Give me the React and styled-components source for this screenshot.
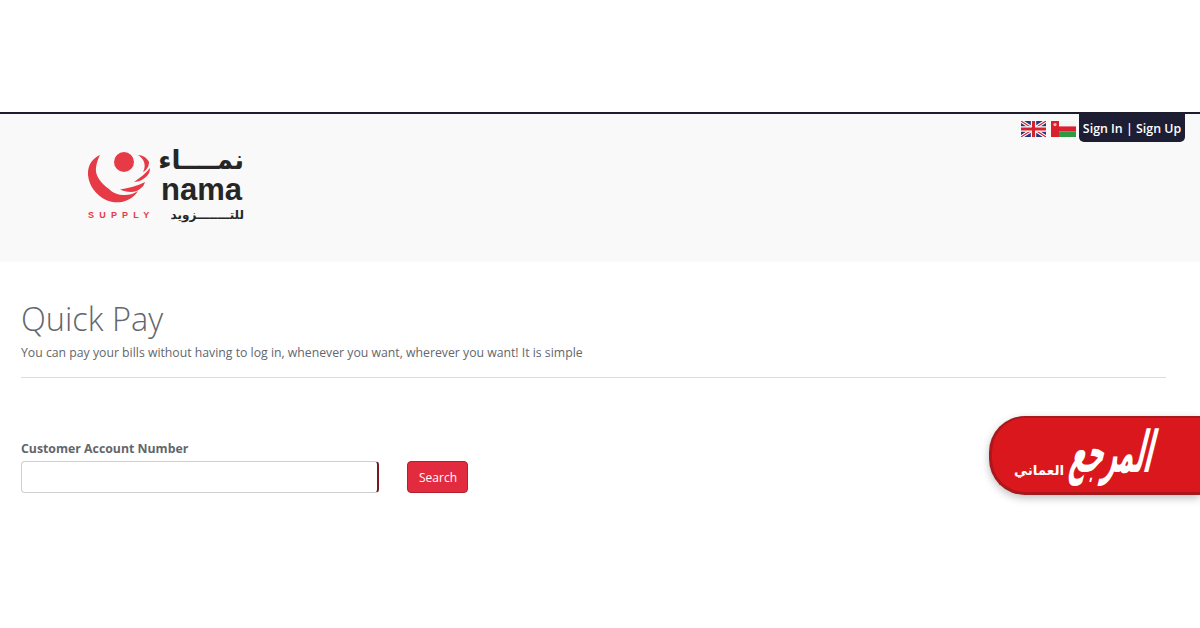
import React from "react";
import styled, { createGlobalStyle } from "styled-components";

const GlobalStyle = createGlobalStyle`
	html, body {
		margin: 0;
		padding: 0;
		background: #fff;
		font-family: "Open Sans", "Liberation Sans", sans-serif;
		color: #63666d;
	}
`;

function UkFlag() {
	return (
		<svg width='25' height='16' viewBox='0 0 25 16'>
			<rect width='25' height='16' fill='#27367c' />
			<path d='M0 0L25 16M25 0L0 16' stroke='#fff' strokeWidth='3.4' />
			<path d='M0 0L25 16M25 0L0 16' stroke='#d2232f' strokeWidth='1.1' />
			<path d='M12.5 0V16M0 8H25' stroke='#fff' strokeWidth='5.4' />
			<path d='M12.5 0V16M0 8H25' stroke='#d2232f' strokeWidth='3.2' />
		</svg>
	);
}

function OmanFlag() {
	return (
		<svg width='25' height='16' viewBox='0 0 25 16'>
			<rect width='25' height='5.4' fill='#f4f4f4' />
			<rect y='5.4' width='25' height='5.2' fill='#d8202f' />
			<rect y='10.6' width='25' height='5.4' fill='#2f9a45' />
			<rect width='8' height='16' fill='#d8202f' />
			<circle cx='4' cy='3.6' r='1.6' fill='#f2b6b6' />
		</svg>
	);
}

function NamaMark() {
	return (
		<svg width='66' height='54' viewBox='0 0 66 54'>
			<circle cx='37' cy='12' r='10' fill='#e63b46' />
			<path
				d='M13 5C4 9 0.5 17 1 25C2 36 9 45 19 50C30 55 44 52 51 41C46 44 42 45 38 45C31 45 26 43 22 39C14 33 8 26 9 18C9.5 13 11 9 13 5Z'
				fill='#e63b46'
			/>
			<path d='M33 39.5C42 38 50 36 58 32C57 35 56 37 54 38C51 41 47 42 44 42C40 42 36 41 33 39.5Z' fill='#e63b46' />
			<path d='M47 32C53 28 59 23 63 18C63 21 62 24 60 26C57 29 52 32 47 32Z' fill='#e63b46' />
			<path d='M51 5C56 5 60 8 62 12C62 16 60 20 56 22C58 18 58 15 57 12C56 9 54 7 51 5Z' fill='#e63b46' />
		</svg>
	);
}

function App() {
	return (
		<>
			<GlobalStyle />
			<TopGap />
			<Header>
				<Logo>
					<LogoTop>
						<NamaMark />
						<LogoWords>
							<ArabicName lang='ar' dir='rtl'>
								نمــــاء
							</ArabicName>
							<LatinName>nama</LatinName>
						</LogoWords>
					</LogoTop>
					<LogoBottom>
						<Supply>SUPPLY</Supply>
						<ArabicSupply lang='ar' dir='rtl'>
							للتــــــــزويد
						</ArabicSupply>
					</LogoBottom>
				</Logo>
				<TopRight>
					<Flags>
						<UkFlag />
						<OmanFlag />
					</Flags>
					<SignBox>Sign In | Sign Up</SignBox>
				</TopRight>
			</Header>
			<Main>
				<Title>Quick Pay</Title>
				<Subtitle>You can pay your bills without having to log in, whenever you want, wherever you want! It is simple</Subtitle>
				<Divider />
				<FieldLabel htmlFor='account'>Customer Account Number</FieldLabel>
				<FormRow>
					<AccountInput id='account' type='text' />
					<SearchButton type='button'>Search</SearchButton>
				</FormRow>
			</Main>
			<Badge>
				<BadgeSmall lang='ar' dir='rtl'>
					العماني
				</BadgeSmall>
				<BadgeBig lang='ar' dir='rtl'>
					المرجع
				</BadgeBig>
			</Badge>
		</>
	);
}

export default App;

const TopGap = styled.div`
	height: 112px;
`;

const Header = styled.header`
	display: flex;
	justify-content: space-between;
	align-items: flex-start;
	height: 148px;
	padding-left: 87px;
	padding-right: 15px;
	border-top: 2px solid #1c1c2c;
	background-color: #f9f9f9;
`;

const Logo = styled.div`
	display: flex;
	flex-direction: column;
	width: 157px;
	padding-top: 36px;
`;

const LogoTop = styled.div`
	display: flex;
	gap: 8px;
	height: 58px;
`;

const LogoWords = styled.div`
	display: flex;
	flex-direction: column;
	width: 83px;
`;

const ArabicName = styled.div`
	height: 25px;
	font-family: "DejaVu Sans", sans-serif;
	font-size: 26px;
	font-weight: 700;
	line-height: 20px;
	color: #262626;
	white-space: nowrap;
`;

const LatinName = styled.div`
	font-family: "Liberation Sans", sans-serif;
	font-size: 31px;
	font-weight: 700;
	line-height: 30px;
	color: #262626;
`;

const LogoBottom = styled.div`
	display: flex;
	justify-content: space-between;
	align-items: center;
	height: 14px;
`;

const Supply = styled.span`
	padding-left: 1px;
	font-family: "Liberation Sans", sans-serif;
	font-size: 9px;
	font-weight: 700;
	letter-spacing: 5.2px;
	color: #e63b46;
`;

const ArabicSupply = styled.span`
	font-family: "DejaVu Sans", sans-serif;
	font-size: 12px;
	font-weight: 700;
	line-height: 14px;
	color: #262626;
	white-space: nowrap;
`;

const TopRight = styled.div`
	display: flex;
	align-items: flex-start;
`;

const Flags = styled.div`
	display: flex;
	gap: 5px;
	padding-top: 7px;
	padding-right: 3px;
`;

const SignBox = styled.div`
	width: 106px;
	height: 28px;
	border-radius: 0 0 5px 5px;
	background-color: #1d1d33;
	color: #fff;
	font-size: 12.4px;
	font-weight: 600;
	line-height: 30px;
	text-align: center;
	white-space: nowrap;
`;

const Main = styled.main`
	padding: 0 34px 0 21px;
`;

const Title = styled.h1`
	margin: 0;
	padding-top: 35px;
	font-size: 32.5px;
	font-weight: 300;
	line-height: 44px;
	color: #63666d;
`;

const Subtitle = styled.p`
	margin: 0;
	padding-top: 3px;
	font-size: 12.25px;
	line-height: 18px;
	color: #63666d;
`;

const Divider = styled.hr`
	height: 1px;
	margin: 15px 0 0;
	border: 0;
	background-color: #dcdcdc;
`;

const FieldLabel = styled.label`
	display: block;
	margin-top: 62px;
	font-size: 12.3px;
	font-weight: 700;
	line-height: 18px;
	color: #63666d;
`;

const FormRow = styled.div`
	display: flex;
	gap: 28px;
	margin-top: 3px;
`;

const AccountInput = styled.input`
	box-sizing: border-box;
	width: 358px;
	height: 32px;
	padding: 0 10px;
	border: 1px solid #cfcfcf;
	border-right: 2px solid #7c1820;
	border-radius: 4px;
	background: #fff;
	outline: none;
`;

const SearchButton = styled.button`
	box-sizing: border-box;
	width: 61px;
	height: 32px;
	padding: 0 0 0 1px;
	border: 1px solid #b3202f;
	border-radius: 4px;
	background-color: #e32b3f;
	color: #fff;
	font-family: inherit;
	font-size: 12px;
	cursor: pointer;
`;

const Badge = styled.aside`
	position: absolute;
	top: 416px;
	left: 989px;
	right: 0;
	box-sizing: border-box;
	display: flex;
	align-items: center;
	gap: 9px;
	height: 79px;
	padding-left: 22px;
	border: 3px solid #a8181c;
	border-right: 0;
	border-top-width: 2px;
	border-radius: 36px 0 0 36px;
	background-color: #da171c;
	box-shadow: 0 3px 8px rgba(0, 0, 0, 0.25);
	color: #fff;
	overflow: hidden;
`;

const BadgeSmall = styled.span`
	margin-top: 29px;
	font-family: "DejaVu Sans", sans-serif;
	font-size: 13.5px;
	font-weight: 700;
	white-space: nowrap;
`;

const BadgeBig = styled.span`
	margin-top: -4px;
	font-family: "DejaVu Sans", sans-serif;
	font-size: 24px;
	font-weight: 700;
	line-height: 40px;
	white-space: nowrap;
	transform: skewX(-14deg) scaleY(2.4);
`;
